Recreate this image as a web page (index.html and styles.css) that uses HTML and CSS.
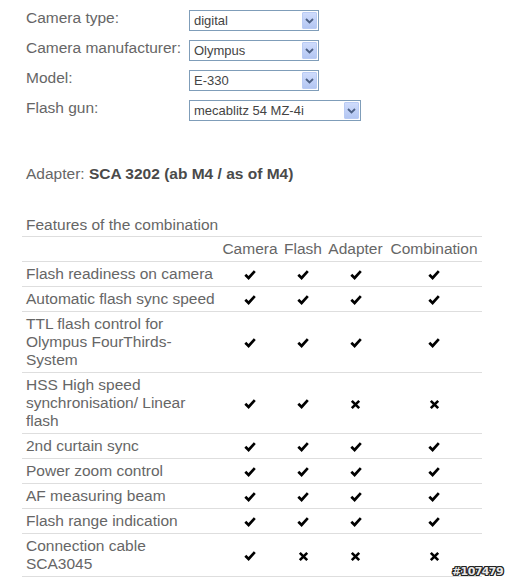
FILE: index.html
```html
<!DOCTYPE html>
<html>
<head>
<meta charset="utf-8">
<link rel="stylesheet" href="styles.css">
</head>
<body>
<div class="page">
  <div class="form">
    <div class="label">Camera type:</div>
    <div class="select w130"><span class="val">digital</span><span class="btn"><svg width="9" height="6" viewBox="0 0 9 6"><path d="M1 1 L4.5 4.5 L8 1" fill="none" stroke="#4d6185" stroke-width="1.8"/></svg></span></div>
    <div class="label">Camera manufacturer:</div>
    <div class="select w130"><span class="val">Olympus</span><span class="btn"><svg width="9" height="6" viewBox="0 0 9 6"><path d="M1 1 L4.5 4.5 L8 1" fill="none" stroke="#4d6185" stroke-width="1.8"/></svg></span></div>
    <div class="label">Model:</div>
    <div class="select w130"><span class="val">E-330</span><span class="btn"><svg width="9" height="6" viewBox="0 0 9 6"><path d="M1 1 L4.5 4.5 L8 1" fill="none" stroke="#4d6185" stroke-width="1.8"/></svg></span></div>
    <div class="label">Flash gun:</div>
    <div class="select w172"><span class="val">mecablitz 54 MZ-4i</span><span class="btn"><svg width="9" height="6" viewBox="0 0 9 6"><path d="M1 1 L4.5 4.5 L8 1" fill="none" stroke="#4d6185" stroke-width="1.8"/></svg></span></div>
  </div>

  <p class="adapter">Adapter: <b>SCA 3202 (ab M4 / as of M4)</b></p>

  <table class="features">
    <colgroup>
      <col class="c-label"><col class="c-cam"><col class="c-flash"><col class="c-adapt"><col class="c-comb">
    </colgroup>
    <tr><td colspan="5" class="caption">Features of the combination</td></tr>
    <tr class="head"><td></td><td>Camera</td><td>Flash</td><td>Adapter</td><td>Combination</td></tr>
    <tr><td class="name">Flash readiness on camera</td><td class="m"><svg class="ok" viewBox="0 0 12 10"><path d="M1.3 4.8 L4.6 8 L10.8 1.2"/></svg></td><td class="m"><svg class="ok" viewBox="0 0 12 10"><path d="M1.3 4.8 L4.6 8 L10.8 1.2"/></svg></td><td class="m"><svg class="ok" viewBox="0 0 12 10"><path d="M1.3 4.8 L4.6 8 L10.8 1.2"/></svg></td><td class="m"><svg class="ok" viewBox="0 0 12 10"><path d="M1.3 4.8 L4.6 8 L10.8 1.2"/></svg></td></tr>
    <tr><td class="name">Automatic flash sync speed</td><td class="m"><svg class="ok" viewBox="0 0 12 10"><path d="M1.3 4.8 L4.6 8 L10.8 1.2"/></svg></td><td class="m"><svg class="ok" viewBox="0 0 12 10"><path d="M1.3 4.8 L4.6 8 L10.8 1.2"/></svg></td><td class="m"><svg class="ok" viewBox="0 0 12 10"><path d="M1.3 4.8 L4.6 8 L10.8 1.2"/></svg></td><td class="m"><svg class="ok" viewBox="0 0 12 10"><path d="M1.3 4.8 L4.6 8 L10.8 1.2"/></svg></td></tr>
    <tr><td class="name">TTL flash control for<br>Olympus FourThirds-<br>System</td><td class="m"><svg class="ok" viewBox="0 0 12 10"><path d="M1.3 4.8 L4.6 8 L10.8 1.2"/></svg></td><td class="m"><svg class="ok" viewBox="0 0 12 10"><path d="M1.3 4.8 L4.6 8 L10.8 1.2"/></svg></td><td class="m"><svg class="ok" viewBox="0 0 12 10"><path d="M1.3 4.8 L4.6 8 L10.8 1.2"/></svg></td><td class="m"><svg class="ok" viewBox="0 0 12 10"><path d="M1.3 4.8 L4.6 8 L10.8 1.2"/></svg></td></tr>
    <tr><td class="name">HSS High speed<br>synchronisation/ Linear<br>flash</td><td class="m"><svg class="ok" viewBox="0 0 12 10"><path d="M1.3 4.8 L4.6 8 L10.8 1.2"/></svg></td><td class="m"><svg class="ok" viewBox="0 0 12 10"><path d="M1.3 4.8 L4.6 8 L10.8 1.2"/></svg></td><td class="m"><svg class="no" viewBox="0 0 11 11"><path d="M1.8 1.8 L9.2 9.2 M9.2 1.8 L1.8 9.2"/></svg></td><td class="m"><svg class="no" viewBox="0 0 11 11"><path d="M1.8 1.8 L9.2 9.2 M9.2 1.8 L1.8 9.2"/></svg></td></tr>
    <tr><td class="name">2nd curtain sync</td><td class="m"><svg class="ok" viewBox="0 0 12 10"><path d="M1.3 4.8 L4.6 8 L10.8 1.2"/></svg></td><td class="m"><svg class="ok" viewBox="0 0 12 10"><path d="M1.3 4.8 L4.6 8 L10.8 1.2"/></svg></td><td class="m"><svg class="ok" viewBox="0 0 12 10"><path d="M1.3 4.8 L4.6 8 L10.8 1.2"/></svg></td><td class="m"><svg class="ok" viewBox="0 0 12 10"><path d="M1.3 4.8 L4.6 8 L10.8 1.2"/></svg></td></tr>
    <tr><td class="name">Power zoom control</td><td class="m"><svg class="ok" viewBox="0 0 12 10"><path d="M1.3 4.8 L4.6 8 L10.8 1.2"/></svg></td><td class="m"><svg class="ok" viewBox="0 0 12 10"><path d="M1.3 4.8 L4.6 8 L10.8 1.2"/></svg></td><td class="m"><svg class="ok" viewBox="0 0 12 10"><path d="M1.3 4.8 L4.6 8 L10.8 1.2"/></svg></td><td class="m"><svg class="ok" viewBox="0 0 12 10"><path d="M1.3 4.8 L4.6 8 L10.8 1.2"/></svg></td></tr>
    <tr><td class="name">AF measuring beam</td><td class="m"><svg class="ok" viewBox="0 0 12 10"><path d="M1.3 4.8 L4.6 8 L10.8 1.2"/></svg></td><td class="m"><svg class="ok" viewBox="0 0 12 10"><path d="M1.3 4.8 L4.6 8 L10.8 1.2"/></svg></td><td class="m"><svg class="ok" viewBox="0 0 12 10"><path d="M1.3 4.8 L4.6 8 L10.8 1.2"/></svg></td><td class="m"><svg class="ok" viewBox="0 0 12 10"><path d="M1.3 4.8 L4.6 8 L10.8 1.2"/></svg></td></tr>
    <tr><td class="name">Flash range indication</td><td class="m"><svg class="ok" viewBox="0 0 12 10"><path d="M1.3 4.8 L4.6 8 L10.8 1.2"/></svg></td><td class="m"><svg class="ok" viewBox="0 0 12 10"><path d="M1.3 4.8 L4.6 8 L10.8 1.2"/></svg></td><td class="m"><svg class="ok" viewBox="0 0 12 10"><path d="M1.3 4.8 L4.6 8 L10.8 1.2"/></svg></td><td class="m"><svg class="ok" viewBox="0 0 12 10"><path d="M1.3 4.8 L4.6 8 L10.8 1.2"/></svg></td></tr>
    <tr><td class="name">Connection cable<br>SCA3045</td><td class="m"><svg class="ok" viewBox="0 0 12 10"><path d="M1.3 4.8 L4.6 8 L10.8 1.2"/></svg></td><td class="m"><svg class="no" viewBox="0 0 11 11"><path d="M1.8 1.8 L9.2 9.2 M9.2 1.8 L1.8 9.2"/></svg></td><td class="m"><svg class="no" viewBox="0 0 11 11"><path d="M1.8 1.8 L9.2 9.2 M9.2 1.8 L1.8 9.2"/></svg></td><td class="m"><svg class="no" viewBox="0 0 11 11"><path d="M1.8 1.8 L9.2 9.2 M9.2 1.8 L1.8 9.2"/></svg></td></tr>
  </table>
</div>
<div class="stamp">#107479</div>
</body>
</html>
```
FILE: styles.css
```css
html, body {
  margin: 0;
  padding: 0;
  background: #fff;
}
body {
  font-family: "Liberation Sans", Arial, sans-serif;
  font-size: 15.5px;
  line-height: 18px;
  color: #666;
}
.page {
  padding-top: 10px;
}
.form {
  display: grid;
  grid-template-columns: 163px auto;
  grid-auto-rows: 21px;
  row-gap: 9px;
  margin-left: 26px;
}
.label {
  margin-top: -1px;
  white-space: nowrap;
}
.select {
  box-sizing: border-box;
  height: 21px;
  border: 1px solid #7f9db9;
  background: #fff;
  display: flex;
  align-items: center;
  justify-content: space-between;
  padding: 1px 1px 1px 4px;
  font-size: 13px;
  color: #444;
}
.w130 { width: 130px; }
.w172 { width: 172px; }
.val {
  line-height: 17px;
  white-space: nowrap;
}
.btn {
  box-sizing: border-box;
  width: 15px;
  height: 17px;
  background: linear-gradient(#cfdcfc, #b3c6f2);
  border: 1px solid #b9cbf4;
  border-radius: 1px;
  display: flex;
  align-items: center;
  justify-content: center;
}
.adapter {
  margin: 44px 0 0 26px;
}
.adapter b {
  color: #4a4a4a;
}
.features {
  margin: 30px 0 0 22px;
  width: 460px;
  border-collapse: collapse;
  table-layout: fixed;
}
.c-label { width: 197px; }
.c-cam { width: 62px; }
.c-flash { width: 44px; }
.c-adapt { width: 61px; }
.c-comb { width: 96px; }
.features td {
  padding: 3px 2px 3px 4px;
  border-bottom: 1px solid #dedede;
  vertical-align: middle;
}
.features td.name {
  white-space: nowrap;
}
.features td.caption {
  padding-bottom: 2px;
}
.head td {
  text-align: center;
  padding-left: 0;
  padding-right: 0;
  white-space: nowrap;
}
.features td.m {
  text-align: center;
  padding: 0;
}
.ok, .no {
  display: block;
  margin: 2px auto 0;
  fill: none;
  stroke: #000;
}
.ok {
  width: 12px;
  height: 10px;
  stroke-width: 2.7;
}
.no {
  width: 11px;
  height: 11px;
  stroke-width: 2.6;
}
.stamp {
  position: absolute;
  left: 452px;
  top: 565px;
  font-family: "DejaVu Sans", sans-serif;
  font-weight: bold;
  font-size: 11px;
  letter-spacing: -0.6px;
  line-height: 13px;
  color: #e8e8e8;
  text-shadow: 1px 0 0 #222, -1px 0 0 #222, 0 1px 0 #222, 0 -1px 0 #222, 1px 1px 0 #222, -1px -1px 0 #222, 1px -1px 0 #222, -1px 1px 0 #222;
}
```
